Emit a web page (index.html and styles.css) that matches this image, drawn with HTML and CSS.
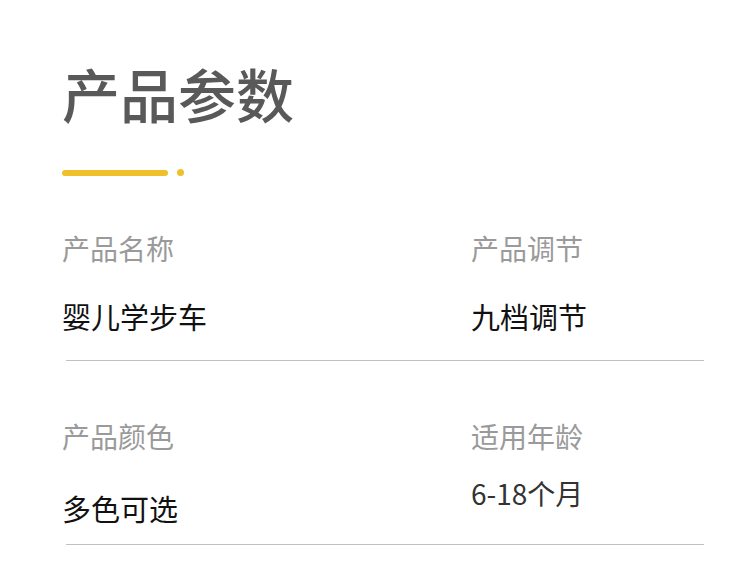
FILE: index.html
```html
<!DOCTYPE html>
<html lang="zh-CN">
<head>
  <meta charset="UTF-8">
  <title>产品参数</title>
  <link rel="stylesheet" href="styles.css">
</head>
<body>
  <div class="page">
    <h1 class="title">产品参数</h1>
    <div class="accent">
      <span class="accent-bar"></span>
      <span class="accent-dot"></span>
    </div>

    <div class="params">
      <div class="param-row">
        <div class="param">
          <p class="param-label">产品名称</p>
          <p class="param-value">婴儿学步车</p>
        </div>
        <div class="param">
          <p class="param-label">产品调节</p>
          <p class="param-value">九档调节</p>
        </div>
      </div>
      <div class="divider"></div>

      <div class="param-row">
        <div class="param">
          <p class="param-label">产品颜色</p>
          <p class="param-value">多色可选</p>
        </div>
        <div class="param">
          <p class="param-label">适用年龄</p>
          <p class="param-value param-value-num">6-18个月</p>
        </div>
      </div>
      <div class="divider"></div>
    </div>
  </div>
</body>
</html>
```

FILE: styles.css
```css
* {
  box-sizing: border-box;
}
body {
  margin: 0;
  background: #ffffff;
  font-family: "Noto Sans CJK SC", "Noto Sans", sans-serif;
}
.page {
  width: 750px;
  height: 563px;
  padding: 64px 46px 0 62px;
  overflow: hidden;
}
.title {
  margin: 0;
  font-size: 58px;
  line-height: 58px;
  font-weight: 500;
  color: #595959;
}

/* 黄色装饰条 */
.accent {
  display: flex;
  align-items: center;
  gap: 9px;
  margin-top: 47px;
  height: 7px;
}
.accent-bar {
  display: block;
  width: 106px;
  height: 6px;
  border-radius: 3px;
  background: #f0c02a;
}
.accent-dot {
  display: block;
  width: 7px;
  height: 7px;
  border-radius: 50%;
  background: #f0c02a;
}

.params {
  margin-top: 58px;
}
.param-row {
  display: grid;
  grid-template-columns: 409px 1fr;
}
.param-row + .divider + .param-row {
  margin-top: 61px;
}
.param p {
  margin: 0;
}
.param-label {
  font-size: 28px;
  line-height: 28px;
  color: #9a9a9a;
}
.param-value {
  margin-top: 40px !important;
  font-size: 29px;
  line-height: 29px;
  color: #111111;
}
.param-row + .divider + .param-row .param-value {
  margin-top: 44px !important;
}
.param-row + .divider + .param-row .param-value-num {
  margin-top: 29px !important;
  color: #333333;
  font-size: 28px;
}
.divider {
  margin: 29px 0 0 4px;
  width: 638px;
  height: 1px;
  background: #c0c0c0;
}
.param-row + .divider + .param-row + .divider {
  margin-top: 21px;
}
```
